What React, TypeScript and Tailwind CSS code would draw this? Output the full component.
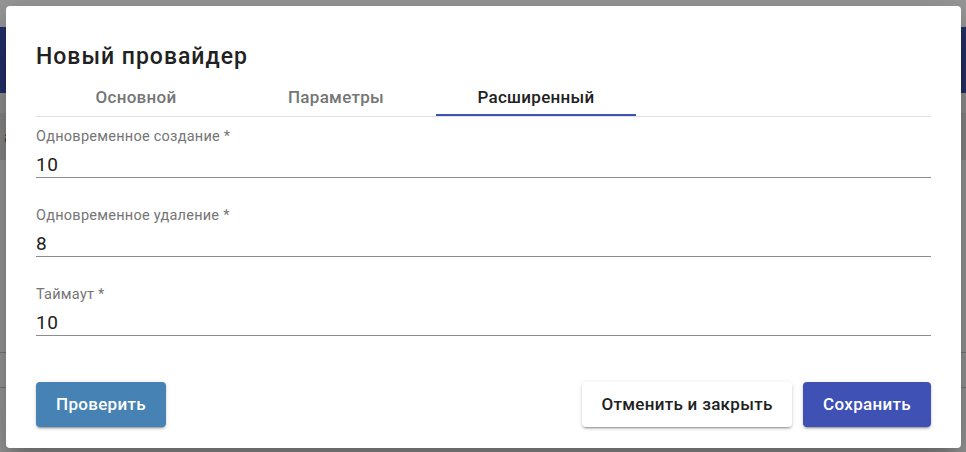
import { useState } from "react";

const tabs = ["Основной", "Параметры", "Расширенный"];

const fields = [
	{ label: "Одновременное создание *", value: "10" },
	{ label: "Одновременное удаление *", value: "8" },
	{ label: "Таймаут *", value: "10" },
];

const btnShadow =
	"shadow-[0_3px_1px_-2px_rgba(0,0,0,0.2),0_2px_2px_0_rgba(0,0,0,0.14),0_1px_5px_0_rgba(0,0,0,0.12)]";

const PageBehind = () => (
	<div className="h-[452px] w-full bg-white overflow-hidden">
		<div className="h-[27px]" />
		<div className="h-[66px] bg-[#3f51b5]" />
		<div className="h-[20px] bg-[#f5f5f5]" />
		<div className="h-[47px] bg-[#e6e6e6] px-1 flex items-center text-[#555] text-lg">
			a
		</div>
		<div className="h-[192px]" />
		<div className="h-[35px] border-t border-[#ccc]" />
		<div className="border-t border-[#ccc]" />
	</div>
);

const Field = (props: { label: string; value: string }) => (
	<div className="flex flex-col">
		<label className="text-[14.5px] leading-[20px] tracking-[0.25px] text-[#757575]">
			{props.label}
		</label>
		<div className="mt-[6px] border-b border-[#8c8c8c] text-[19px] leading-[24px] tracking-[0.5px] text-[#212121]">
			{props.value}
		</div>
	</div>
);

export default function App() {
	const [active, setActive] = useState(2);

	return (
		<div className="relative h-[452px] w-[966px] overflow-hidden font-['Roboto',sans-serif]">
			<PageBehind />
			<div className="absolute inset-0 bg-black/40 pl-[6px] pt-[6px]">
				<div className="w-[955px] h-[442px] bg-white rounded-[4px] shadow-[0_11px_15px_-7px_rgba(0,0,0,0.2),0_24px_38px_3px_rgba(0,0,0,0.14),0_9px_46px_8px_rgba(0,0,0,0.12)] px-[30px] pt-[37px] flex flex-col">
					<h2 className="text-[23px] leading-[28px] font-medium tracking-[1px] text-[#212121]">
						Новый провайдер
					</h2>
					<div className="mt-[10px] flex border-b border-[#e0e0e0]">
						{tabs.map((t, i) => (
							<button
								key={t}
								onClick={() => setActive(i)}
								className={`w-[200px] h-[35px] flex items-center justify-center text-[17px] tracking-[0.3px] font-medium border-b-2 ${
									active === i
										? "text-[#212121] border-[#3f51b5]"
										: "text-[#757575] border-transparent"
								}`}
							>
								{t}
							</button>
						))}
					</div>
					<div className="mt-[10px] flex flex-col gap-[28px]">
						{fields.map((f) => (
							<Field key={f.label} label={f.label} value={f.value} />
						))}
					</div>
					<div className="mt-[46px] flex items-center">
						<button
							className={`h-[45px] w-[130px] rounded-[4px] bg-[#4682b4] text-white text-[17px] tracking-[0.3px] font-medium ${btnShadow}`}
						>
							Проверить
						</button>
						<div className="ml-auto flex gap-[11px]">
							<button
								className={`h-[45px] w-[210px] rounded-[4px] bg-white text-[#212121] text-[17px] tracking-[0.3px] font-medium ${btnShadow}`}
							>
								Отменить и закрыть
							</button>
							<button
								className={`h-[45px] w-[128px] rounded-[4px] bg-[#3f51b5] text-white text-[17px] tracking-[0.3px] font-medium ${btnShadow}`}
							>
								Сохранить
							</button>
						</div>
					</div>
				</div>
			</div>
		</div>
	);
}
